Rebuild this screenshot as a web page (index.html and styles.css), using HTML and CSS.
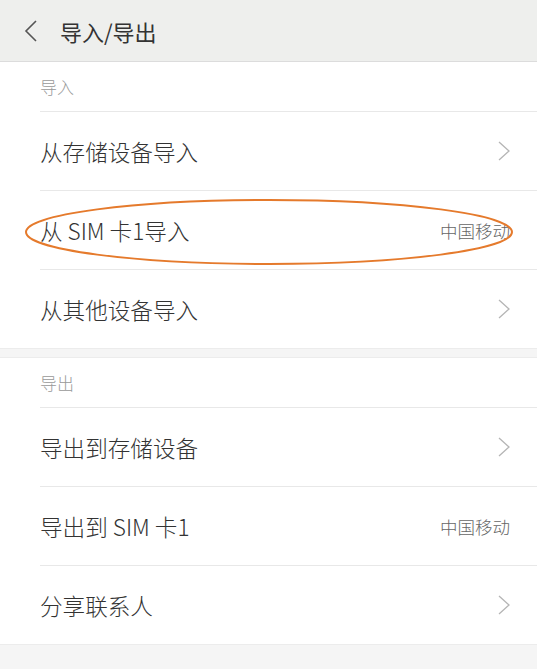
FILE: index.html
```html
<!DOCTYPE html>
<html lang="zh">
<head>
<meta charset="utf-8">
<link rel="stylesheet" href="styles.css">
</head>
<body>
<div class="page">
  <header class="bar">
    <svg class="back" width="14" height="22" viewBox="0 0 14 22"><path d="M12 1 L2 11 L12 21" fill="none" stroke="#555" stroke-width="1.6"/></svg>
    <h1 class="title">导入/导出</h1>
  </header>
  <section class="group">
    <div class="group-head">导入</div>
    <div class="row"><span class="label">从存储设备导入</span><svg class="chev" width="12" height="20" viewBox="0 0 12 20"><path d="M1 1 L11 10 L1 19" fill="none" stroke="#b5b5b5" stroke-width="1.3"/></svg></div>
    <div class="row"><span class="label">从 SIM 卡1导入</span><span class="value">中国移动</span></div>
    <div class="row"><span class="label">从其他设备导入</span><svg class="chev" width="12" height="20" viewBox="0 0 12 20"><path d="M1 1 L11 10 L1 19" fill="none" stroke="#b5b5b5" stroke-width="1.3"/></svg></div>
  </section>
  <div class="gap"></div>
  <section class="group">
    <div class="group-head">导出</div>
    <div class="row"><span class="label">导出到存储设备</span><svg class="chev" width="12" height="20" viewBox="0 0 12 20"><path d="M1 1 L11 10 L1 19" fill="none" stroke="#b5b5b5" stroke-width="1.3"/></svg></div>
    <div class="row"><span class="label">导出到 SIM 卡1</span><span class="value">中国移动</span></div>
    <div class="row"><span class="label">分享联系人</span><svg class="chev" width="12" height="20" viewBox="0 0 12 20"><path d="M1 1 L11 10 L1 19" fill="none" stroke="#b5b5b5" stroke-width="1.3"/></svg></div>
  </section>
  <div class="bottom"></div>
  <svg class="mark" width="537" height="80" viewBox="0 0 537 80"><ellipse cx="269" cy="33" rx="243" ry="32" fill="none" stroke="#e57a2c" stroke-width="2"/></svg>
</div>
</body>
</html>
```
FILE: styles.css
```css
html, body {
  margin: 0;
  padding: 0;
  background: #f5f5f5;
}
body {
  font-family: "Noto Sans CJK SC", "Noto Sans", sans-serif;
  width: 537px;
  height: 669px;
  overflow: hidden;
}
.page {
  position: relative;
}
.bar {
  box-sizing: border-box;
  height: 62px;
  background: #eeefed;
  border-bottom: 1px solid #dcdcdc;
  display: flex;
  align-items: center;
}
.back {
  margin-left: 24px;
  margin-right: 22px;
}
.title {
  margin: 0;
  font-size: 22px;
  font-weight: 400;
  color: #333;
}
.group {
  background: #fff;
  padding-left: 40px;
}
.group-head {
  height: 49px;
  display: flex;
  align-items: center;
  font-size: 17px;
  font-weight: 300;
  color: #999;
}
.row {
  height: 78px;
  border-top: 1px solid #e8e8e8;
  display: flex;
  align-items: center;
  justify-content: space-between;
  padding-right: 27px;
}
.row:first-of-type {
  height: 77px;
}
.label {
  font-size: 22.6px;
  font-weight: 300;
  color: #333;
}
.value {
  font-size: 17.5px;
  font-weight: 300;
  color: #666;
}
.gap {
  height: 10px;
  border-top: 1px solid #ececec;
  border-bottom: 1px solid #ececec;
  box-sizing: border-box;
}
.bottom {
  height: 30px;
  border-top: 1px solid #ececec;
}
.mark {
  position: absolute;
  left: 0;
  top: 199px;
}
```
